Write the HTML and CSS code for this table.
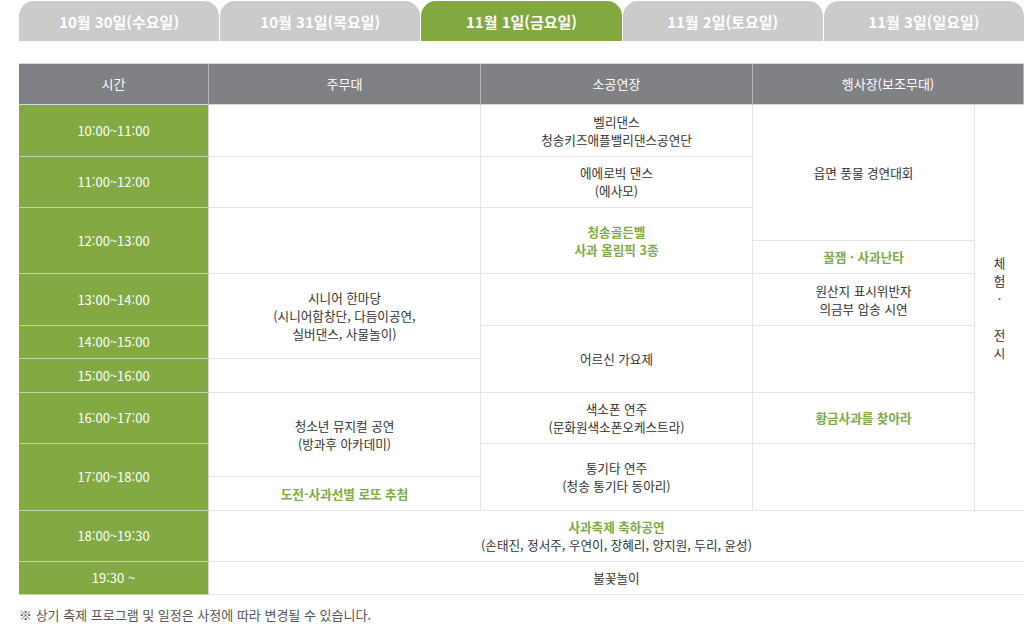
FILE: index.html
```html
<!DOCTYPE html>
<html lang="ko">
<head>
<meta charset="utf-8">
<title>축제 일정</title>
<link rel="stylesheet" href="styles.css">
</head>
<body>
<div class="page">
  <nav class="tabs">
    <a class="tab">10월 30일(수요일)</a>
    <a class="tab">10월 31일(목요일)</a>
    <a class="tab active">11월 1일(금요일)</a>
    <a class="tab">11월 2일(토요일)</a>
    <a class="tab">11월 3일(일요일)</a>
  </nav>

  <div class="schedule">
    <div class="th c1">시간</div>
    <div class="th c2">주무대</div>
    <div class="th c3">소공연장</div>
    <div class="th c45">행사장(보조무대)</div>

    <div class="time r2">10:00~11:00</div>
    <div class="time r3">11:00~12:00</div>
    <div class="time r4 s2">12:00~13:00</div>
    <div class="time r6">13:00~14:00</div>
    <div class="time r7">14:00~15:00</div>
    <div class="time r8">15:00~16:00</div>
    <div class="time r9">16:00~17:00</div>
    <div class="time r10 s2">17:00~18:00</div>
    <div class="time r12">18:00~19:30</div>
    <div class="time r13">19:30 ~</div>

    <div class="td c2 r2"></div>
    <div class="td c2 r3"></div>
    <div class="td c2 r4 s2"></div>
    <div class="td c2 r6 s2">시니어 한마당<br>(시니어합창단, 다듬이공연,<br>실버댄스, 사물놀이)</div>
    <div class="td c2 r8"></div>
    <div class="td c2 r9 s2">청소년 뮤지컬 공연<br>(방과후 아카데미)</div>
    <div class="td c2 r11 hl">도전-사과선별 로또 추첨</div>

    <div class="td c3 r2">벨리댄스<br>청송키즈애플밸리댄스공연단</div>
    <div class="td c3 r3">에에로빅 댄스<br>(에사모)</div>
    <div class="td c3 r4 s2 hl">청송골든벨<br>사과 올림픽 3종</div>
    <div class="td c3 r6"></div>
    <div class="td c3 r7 s2">어르신 가요제</div>
    <div class="td c3 r9">색소폰 연주<br>(문화원색소폰오케스트라)</div>
    <div class="td c3 r10 s2">통기타 연주<br>(청송 통기타 동아리)</div>

    <div class="td c4 r2 s3">읍면 풍물 경연대회</div>
    <div class="td c4 r5 hl">꿀잼 · 사과난타</div>
    <div class="td c4 r6">원산지 표시위반자<br>의금부 압송 시연</div>
    <div class="td c4 r7 s2"></div>
    <div class="td c4 r9 hl">황금사과를 찾아라</div>
    <div class="td c4 r10 s2"></div>

    <div class="td c5 r2 s10">체<br>험<br>·<br><br>전<br>시</div>

    <div class="td c25 r12"><div><span class="hl">사과축제 축하공연</span><br>(손태진, 정서주, 우연이, 장혜리, 양지원, 두리, 윤성)</div></div>
    <div class="td c25 r13">불꽃놀이</div>
  </div>

  <p class="note">※ 상기 축제 프로그램 및 일정은 사정에 따라 변경될 수 있습니다.</p>
</div>
</body>
</html>
```

FILE: styles.css
```css
html, body {
  margin: 0;
  padding: 0;
  background: #fff;
  overflow: hidden;
}
body {
  font-family: "Noto Sans CJK KR", "Noto Sans", sans-serif;
  color: #333;
}
.page {
  width: 1005px;
  padding-left: 19px;
}
.tabs {
  display: flex;
  gap: 1px;
  padding-top: 1px;
}
.tab {
  flex: 1 1 0;
  height: 40px;
  display: flex;
  align-items: center;
  justify-content: center;
  background: #cbcbcb;
  color: #fff;
  font-size: 15px;
  font-weight: 700;
  border-radius: 15px 15px 0 0;
}
.tab.active {
  background: #82a93f;
}
.schedule {
  margin-top: 22px;
  display: grid;
  grid-template-columns: 190px 272px 272px 222px 49px;
  grid-template-rows: 42px 52px 51px 33px 33px 52px 33px 34px 51px 33px 34px 51px 33px;
  font-size: 12.6px;
  line-height: 18px;
}
.schedule > div {
  box-sizing: border-box;
  display: flex;
  align-items: center;
  justify-content: center;
  text-align: center;
}
.th {
  grid-row: 1;
  background: #808185;
  color: #fff;
  font-size: 13px;
  border-top: 1px solid #d9d9d9;
  border-right: 1px solid #b5b5b8;
  border-bottom: 1px solid #d9d9d9;
}
.time {
  grid-column: 1;
  background: #83a942;
  color: #fff;
  font-size: 13px;
  border-bottom: 1px solid #c3d1ac;
  border-right: 1px solid #d6d6d6;
}
.td {
  border-right: 1px solid #e4e4e4;
  border-bottom: 1px solid #e4e4e4;
}
.hl {
  color: #7eaa48;
  font-weight: 700;
}
.c1 { grid-column: 1; }
.c2 { grid-column: 2; }
.c3 { grid-column: 3; }
.c4 { grid-column: 4; }
.c5 { grid-column: 5; }
.c45 { grid-column: 4 / span 2; }
.c25 { grid-column: 2 / span 4; }
.r2 { grid-row-start: 2; }
.r3 { grid-row-start: 3; }
.r4 { grid-row-start: 4; }
.r5 { grid-row-start: 5; }
.r6 { grid-row-start: 6; }
.r7 { grid-row-start: 7; }
.r8 { grid-row-start: 8; }
.r9 { grid-row-start: 9; }
.r10 { grid-row-start: 10; }
.r11 { grid-row-start: 11; }
.r12 { grid-row-start: 12; }
.r13 { grid-row-start: 13; }
.s2 { grid-row-end: span 2; }
.s3 { grid-row-end: span 3; }
.s10 { grid-row-end: span 10; }
.c5.td { border-right: none; }
.c25.td { border-right: none; }
.note {
  margin: 10px 0 0;
  font-size: 13px;
  color: #555;
}
```
